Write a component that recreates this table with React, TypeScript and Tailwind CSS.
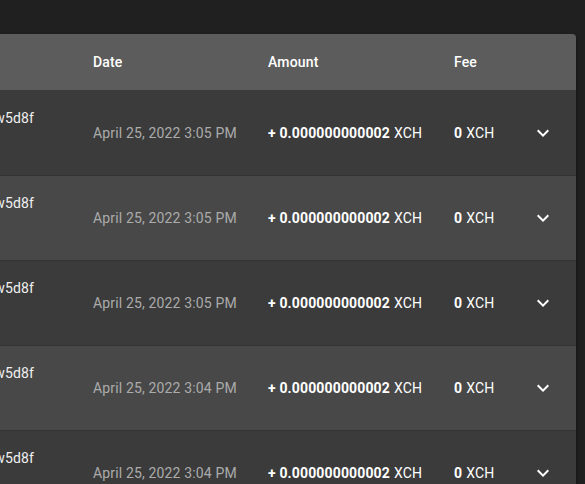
import React from 'react';

type Tx = { date: string };

const rows: Tx[] = [
  { date: 'April 25, 2022 3:05 PM' },
  { date: 'April 25, 2022 3:05 PM' },
  { date: 'April 25, 2022 3:05 PM' },
  { date: 'April 25, 2022 3:04 PM' },
  { date: 'April 25, 2022 3:04 PM' },
];

const cols = 'grid grid-cols-[77px_175px_186px_77px_61px]';

const ExpandMore = () => (
  <svg width="24" height="24" viewBox="0 0 24 24" fill="#ffffff">
    <path d="M16.59 8.59 12 13.17 7.41 8.59 6 10l6 6 6-6z" />
  </svg>
);

const App: React.FC = () => {
  return (
    <div
      className="min-h-[484px] h-[484px] overflow-hidden bg-[#202020] pt-[34px] text-[14px] leading-5 tracking-[0.01071em]"
      style={{ fontFamily: 'Roboto, "Liberation Sans", sans-serif' }}
    >
      <div className="w-[576px] rounded-tr-[4px] overflow-hidden bg-[#3b3b3b] shadow-[0_2px_4px_rgba(0,0,0,0.5)]">
        {/* Header */}
        <div className={`${cols} h-[57px] items-center bg-[#5c5c5c] border-b border-[#3a3a3a] text-white font-medium`}>
          <div />
          <div className="px-4">Date</div>
          <div className="px-4">Amount</div>
          <div className="px-4">Fee</div>
          <div />
        </div>

        {/* Rows */}
        {rows.map((row, i) => (
          <div
            key={i}
            className={`${cols} h-[85px] border-b border-[#333333] ${i % 2 === 1 ? 'bg-[#484848]' : 'bg-[#3b3b3b]'}`}
          >
            <div className="flex justify-end overflow-hidden pr-[43px] pt-[17px] text-[#f0f0f0] whitespace-nowrap">
              <span>xch1qj8t5mv2k0yq7w5d8f</span>
            </div>
            <div className="flex items-center px-4 text-[#ababab] whitespace-nowrap">{row.date}</div>
            <div className="flex items-center px-4 text-white whitespace-nowrap">
              <span className="font-bold">+ 0.000000000002</span>
              <span className="ml-1">XCH</span>
            </div>
            <div className="flex items-center px-4 text-white whitespace-nowrap">
              <span className="font-bold">0</span>
              <span className="ml-1">XCH</span>
            </div>
            <div className="flex items-center pl-4">
              <ExpandMore />
            </div>
          </div>
        ))}
      </div>
    </div>
  );
};

export default App;
